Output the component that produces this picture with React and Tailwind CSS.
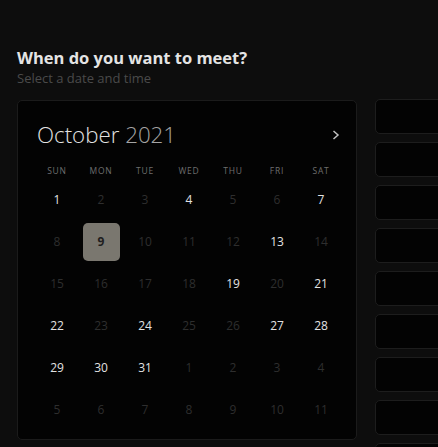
const WEEKDAYS = ["SUN", "MON", "TUE", "WED", "THU", "FRI", "SAT"];

const AVAILABLE = [1, 4, 7, 13, 19, 21, 22, 24, 27, 28, 29, 30, 31];
const SELECTED = 9;

// October 2021 starts on a Friday, but the grid here begins at the 1st
function buildDays() {
  const days = [];
  for (let d = 1; d <= 31; d++) days.push({ day: d, current: true });
  let next = 1;
  while (days.length < 42) days.push({ day: next++, current: false });
  return days;
}

function DayCell({ day, current }) {
  if (current && day === SELECTED) {
    return (
      <div className="flex items-center justify-center">
        <div className="w-[37px] h-[38px] rounded-[5px] bg-[#7a776f] flex items-center justify-center text-[12px] font-bold text-[#1e1e1e]">
          {day}
        </div>
      </div>
    );
  }

  const available = current && AVAILABLE.includes(day);

  return (
    <div
      className={
        "flex items-center justify-center text-[12px] " +
        (available ? "text-[#e2e2e2]" : "text-[#2e2e2e]")
      }
    >
      {day}
    </div>
  );
}

export default function App() {
  const days = buildDays();
  const slots = Array.from({ length: 9 });

  return (
    <div
      className="w-[438px] h-[447px] overflow-hidden bg-[#0d0d0d] pl-[17px] pt-[47px]"
      style={{ fontFamily: '"Open Sans", "Liberation Sans", sans-serif' }}
    >
      <h1 className="text-[16.5px] leading-[22px] font-bold text-[#e4e4e4]">
        When do you want to meet?
      </h1>
      <p className="text-[13px] leading-[18px] text-[#4a4a4a]">
        Select a date and time
      </p>

      <div className="flex gap-[18px] mt-[13px] items-start">
        {/* CALENDAR */}
        <div className="w-[340px] h-[340px] shrink-0 rounded-[5px] border border-[#1b1b1b] bg-[#030303] pt-[17px] px-[17px]">
          <div className="h-[34px] flex items-center justify-between">
            <div className="pl-[2px] text-[22.3px] font-light text-[#e2e2e2]">
              October <span className="text-[#a5a5a5]">2021</span>
            </div>
            <svg
              width="8"
              height="10"
              viewBox="0 0 8 10"
              className="-mr-px"
            >
              <path
                d="M1.5 1 L6 5 L1.5 9"
                fill="none"
                stroke="#c2c2c2"
                strokeWidth="1.5"
              />
            </svg>
          </div>

          <div className="grid grid-cols-[repeat(7,44px)] h-[16px] mt-[11px]">
            {WEEKDAYS.map((w) => (
              <div
                key={w}
                className="flex items-center justify-center text-[8.5px] tracking-[0.8px] text-[#6e6e6e]"
              >
                {w}
              </div>
            ))}
          </div>

          <div className="grid grid-cols-[repeat(7,44px)] auto-rows-[42px]">
            {days.map((d, i) => (
              <DayCell key={i} day={d.day} current={d.current} />
            ))}
          </div>
        </div>

        {/* TIME SLOTS */}
        <div className="flex flex-col gap-[8px] -mt-px">
          {slots.map((_, i) => (
            <div
              key={i}
              className="w-[120px] h-[35px] shrink-0 rounded-[5px] border border-[#1d1d1d] bg-[#030303]"
            />
          ))}
        </div>
      </div>
    </div>
  );
}
